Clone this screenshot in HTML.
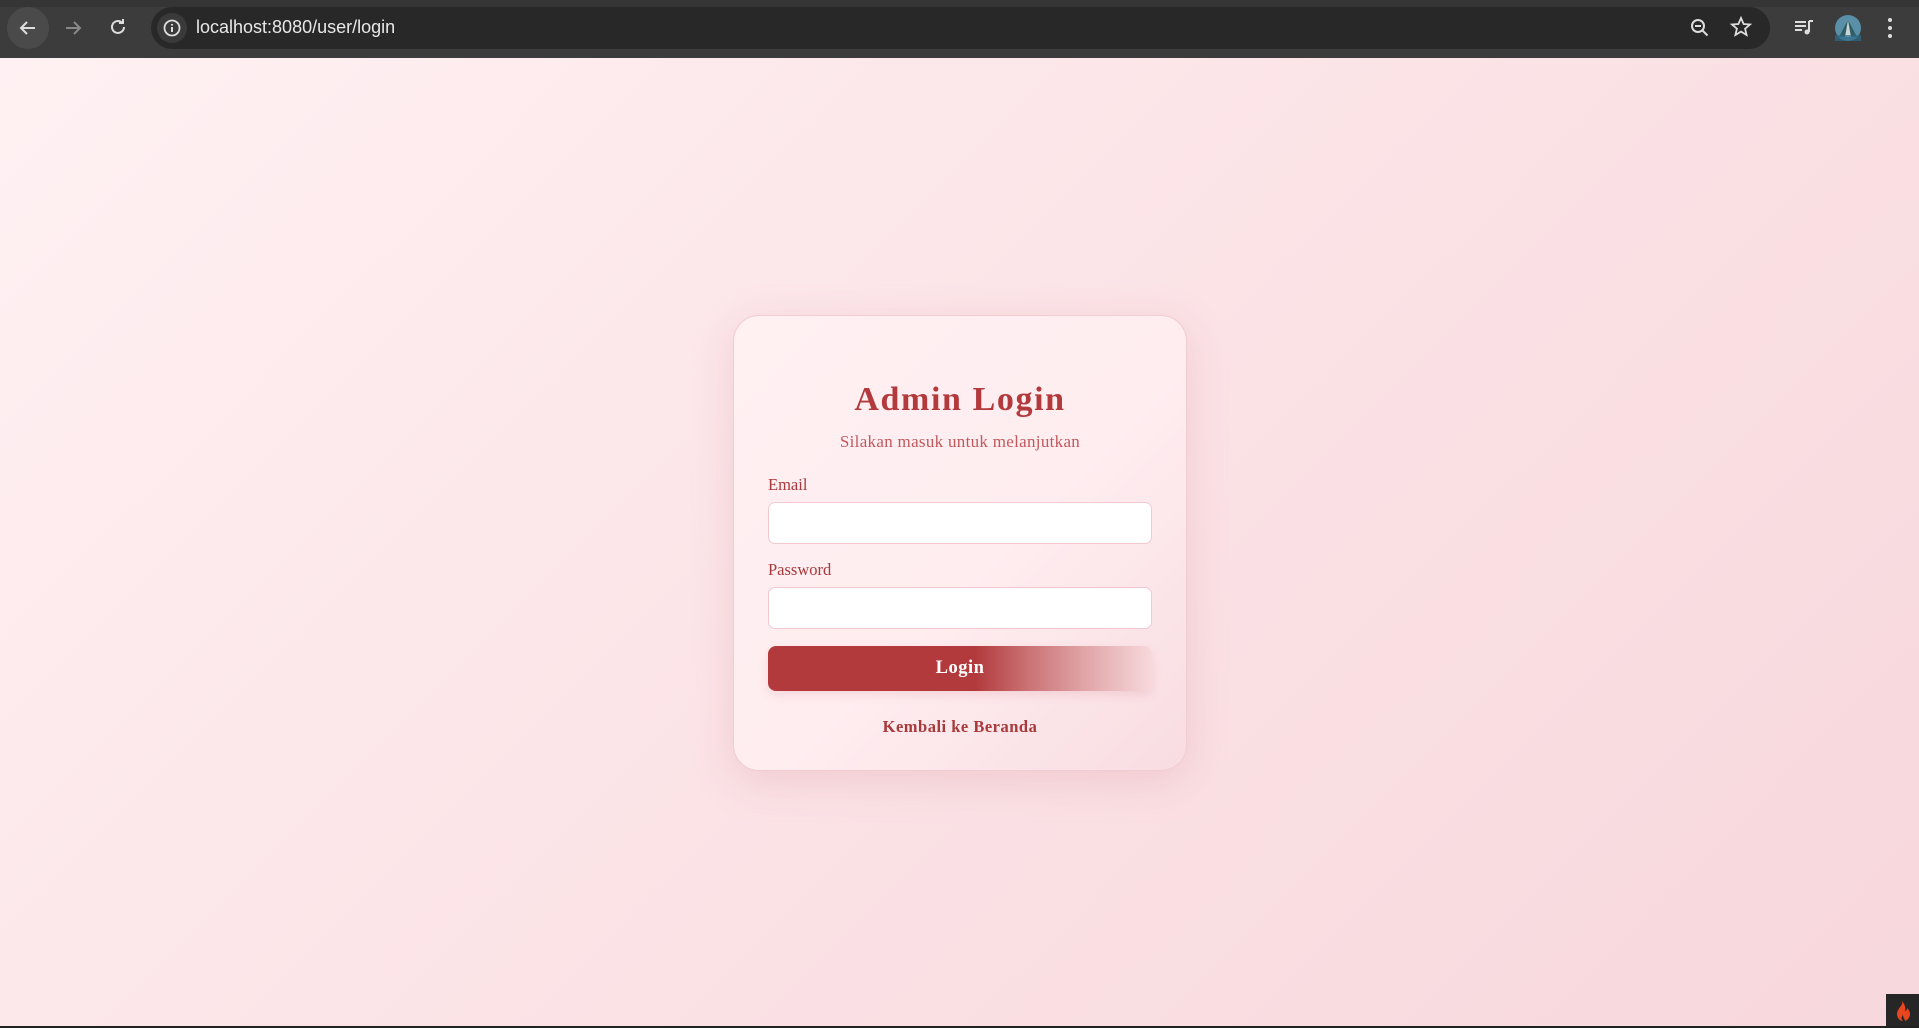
<!DOCTYPE html>
<html><head><meta charset="utf-8"><style>
*{margin:0;padding:0;box-sizing:border-box}
html,body{width:1919px;height:1028px;overflow:hidden}
body{font-family:"Liberation Serif",serif;background:#fff;position:relative}
.bar{position:absolute;left:0;top:0;width:1919px;height:58px;background:#3c3c3c}
.top{position:absolute;left:0;top:0;width:1919px;height:7px;background:#353535}
.back{position:absolute;left:7px;top:7px;width:42px;height:42px;border-radius:50%;background:#4a4a4a}
.url{position:absolute;left:151px;top:7px;width:1619px;height:42px;border-radius:21px;background:#282828}
.info{position:absolute;left:157px;top:13px;width:30px;height:30px;border-radius:50%;background:#3a3a3a}
.urltext{position:absolute;left:196px;top:17px;font-family:"Liberation Sans",sans-serif;font-size:18px;color:#e8e8e8}
.page{position:absolute;left:0;top:58px;width:1919px;height:970px;background:linear-gradient(135deg,#fff1f3 0%,#fbe3e6 50%,#f7d7dc 100%)}
.card{position:absolute;left:733px;top:315px;width:454px;height:456px;border-radius:26px;border:1px solid #f1ccd1;
background:linear-gradient(135deg,#fff0f2 0%,#ffedf0 55%,#f8dde1 100%);box-shadow:0 10px 40px rgba(220,150,160,.3)}
h1{position:absolute;left:0;width:100%;top:65px;text-align:center;font-size:34px;font-weight:bold;color:#b23a3d;letter-spacing:1.6px}
.sub{position:absolute;left:0;width:100%;top:116px;text-align:center;font-size:17px;color:#c0595c;letter-spacing:.3px}
.lbl{position:absolute;left:34px;font-size:16.5px;color:#a8393c}
.inp{position:absolute;left:34px;width:384px;height:42px;background:#fff;border:1px solid #f3c9cf;border-radius:7px}
.btn{position:absolute;left:34px;top:330px;width:384px;height:45px;border-radius:8px;
background:linear-gradient(90deg,#b23a3d 0%,#b23a3d 54%,#c96f71 67%,#e0a3a6 82%,#f7d9dc 100%);
color:#fff;font-weight:bold;font-size:18.5px;text-align:center;line-height:45px;letter-spacing:.5px;box-shadow:0 4px 10px rgba(180,60,70,.12)}
.link{position:absolute;left:0;width:100%;top:401px;text-align:center;font-weight:bold;font-size:16.5px;color:#a8393c;letter-spacing:.5px}
.ci{position:absolute;left:1886px;top:994px;width:33px;height:32px;background:#262626}
.bl{position:absolute;left:0;top:1026px;width:1919px;height:2px;background:#222}
</style></head><body>
<div class="bar"></div><div class="top"></div>
<div class="back"></div>
<svg style="position:absolute;left:16px;top:16px" width="24" height="24" viewBox="0 0 24 24"><path d="M19 12H6M11 6l-6 6 6 6" stroke="#ddd" stroke-width="2" fill="none"/></svg>
<svg style="position:absolute;left:61px;top:16px" width="24" height="24" viewBox="0 0 24 24"><path d="M5 12h13M13 6l6 6-6 6" stroke="#888" stroke-width="2" fill="none"/></svg>
<svg style="position:absolute;left:106px;top:15px" width="24" height="24" viewBox="0 0 24 24"><path d="M18 12a6 6 0 1 1-2-4.5M17 4v4h-4" stroke="#ddd" stroke-width="2" fill="none"/></svg>
<div class="url"></div><div class="info"></div>
<svg style="position:absolute;left:162px;top:18px" width="20" height="20" viewBox="0 0 20 20"><circle cx="10" cy="10" r="7.5" stroke="#ddd" stroke-width="1.8" fill="none"/><path d="M10 9v5M10 6v1.5" stroke="#ddd" stroke-width="2"/></svg>
<div class="urltext">localhost:8080/user/login</div>
<svg style="position:absolute;left:1689px;top:17px" width="22" height="22" viewBox="0 0 22 22"><circle cx="9" cy="9" r="6" stroke="#ddd" stroke-width="2" fill="none"/><path d="M13.5 13.5l5 5M6 9h6" stroke="#ddd" stroke-width="2"/></svg>
<svg style="position:absolute;left:1729px;top:15px" width="24" height="24" viewBox="0 0 24 24"><path d="M12 3l2.6 6 6.4.5-4.9 4.2 1.5 6.3L12 16.6 6.4 20l1.5-6.3L3 9.5 9.4 9z" stroke="#ddd" stroke-width="1.8" fill="none"/></svg>
<svg style="position:absolute;left:1792px;top:15px" width="24" height="24" viewBox="0 0 24 24"><path d="M3 7h11M3 11h11M3 15h7" stroke="#ddd" stroke-width="2"/><path d="M17 6v11" stroke="#ddd" stroke-width="2"/><circle cx="15" cy="17" r="2.5" fill="#ddd"/><path d="M17 6h4" stroke="#ddd" stroke-width="2"/></svg>
<svg style="position:absolute;left:1835px;top:15px" width="26" height="26" viewBox="0 0 26 26"><circle cx="13" cy="13" r="13" fill="#5a8fa8"/><path d="M4 22L13 5l9 17z" fill="#2f5d63"/><path d="M13 5l3 17h-6z" fill="#c8d6d8"/><path d="M0 20h26v6H0z" fill="#2d6c8a" opacity=".7"/></svg>
<svg style="position:absolute;left:1886px;top:16px" width="8" height="24" viewBox="0 0 8 24"><circle cx="4" cy="4" r="2" fill="#ddd"/><circle cx="4" cy="12" r="2" fill="#ddd"/><circle cx="4" cy="20" r="2" fill="#ddd"/></svg>
<div class="page"></div>
<div class="card">
<h1>Admin Login</h1>
<div class="sub">Silakan masuk untuk melanjutkan</div>
<div class="lbl" style="top:159px">Email</div>
<div class="inp" style="top:186px"></div>
<div class="lbl" style="top:244px">Password</div>
<div class="inp" style="top:271px"></div>
<div class="btn">Login</div>
<div class="link">Kembali ke Beranda</div>
</div>
<div class="ci"></div>
<svg style="position:absolute;left:1895px;top:1001px" width="16" height="20" viewBox="0 0 16 20"><path d="M7 0C9 4 2 7 2 13c0 4 3 7 6 7-2-2-2-4 0-6 0 3 2 4 2 6 3-1 5-4 5-7 0-3-2-5-3-6 0 2-1 3-2 3 1-4-1-8-3-10z" fill="#e8461e"/></svg>
<div class="bl"></div>
</body></html>
